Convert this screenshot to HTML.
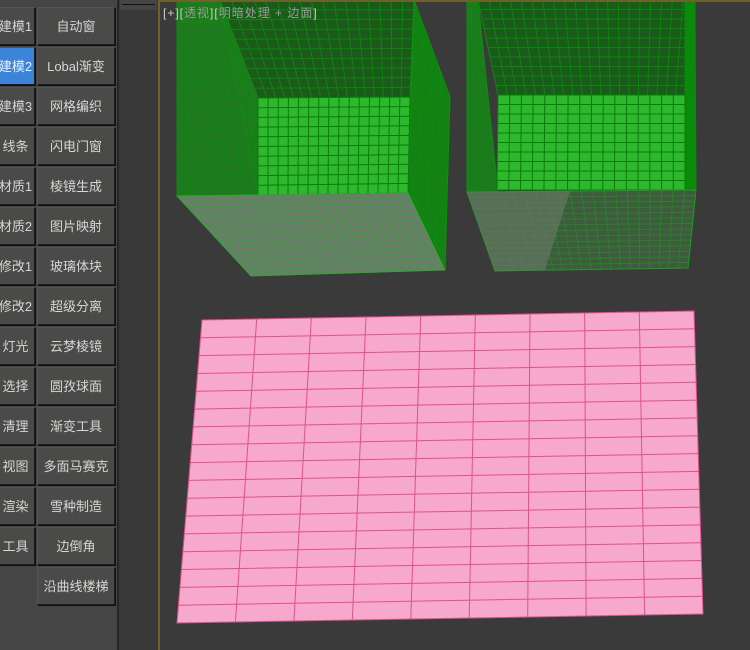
<!DOCTYPE html>
<html><head><meta charset="utf-8"><style>
body{margin:0;width:750px;height:650px;background:#3a3a3a;position:relative;overflow:hidden;font-family:"Liberation Sans","Noto Sans CJK SC",sans-serif}
#lp{position:absolute;left:0;top:0;width:117px;height:650px;background:#454545}
.b{position:absolute;height:38px;background:#4a4a48;border:1px solid #1c1c1c;border-top-color:#555;border-left-color:#555;box-shadow:1px 1px 0 #111;color:#d6d6d6;font-size:13px;line-height:38px;text-align:center;box-sizing:border-box}
.c1{left:-4px;width:39px}
.c2{left:37px;width:78px}
.act{background:#3b84d9;color:#eaf2ff}
#sep{position:absolute;left:117px;top:0;width:2px;height:650px;background:#262626}
#mid{position:absolute;left:119px;top:0;width:40px;height:650px;background:#383838}
#bar{position:absolute;left:120px;top:0;width:37px;height:10px;background:#454545}
#bar div{position:absolute;left:2px;right:2px;top:4px;height:1px;background:#111}
#yl{position:absolute;left:158px;top:0;width:2px;height:650px;background:#6f6128}
#yt{position:absolute;left:158px;top:0;width:592px;height:2px;background:#6f6128}
#lab{position:absolute;left:163px;top:4px;font-size:12px;color:#cfcfcf;letter-spacing:1px}
#lab span{color:#9a9a9a}
svg{position:absolute;left:0;top:0}
</style></head><body>
<div id="lp"></div>
<div id="btns"></div>
<div id="sep"></div><div id="mid"></div><div id="bar"><div></div></div>
<svg id="s" width="750" height="650"></svg>
<div id="yl"></div><div id="yt"></div>
<div id="lab">[+][<span>透视</span>][<span>明暗处理 + 边面</span>]</div>
<script>
var c1=["建模1","建模2","建模3","线条","材质1","材质2","修改1","修改2","灯光","选择","清理","视图","渲染","工具"];
var c2=["自动窗","Lobal渐变","网格编织","闪电门窗","棱镜生成","图片映射","玻璃体块","超级分离","云梦棱镜","圆孜球面","渐变工具","多面马赛克","雪种制造","边倒角","沿曲线楼梯"];
var h="";
c1.forEach(function(t,i){h+='<div class="b c1'+(i==1?' act':'')+'" style="top:'+(7+i*40)+'px">'+t+'</div>'});
c2.forEach(function(t,i){h+='<div class="b c2" style="top:'+(7+i*40)+'px">'+t+'</div>'});
document.getElementById('btns').innerHTML=h;
var S="";
function L(a,b,t){return [a[0]+(b[0]-a[0])*t,a[1]+(b[1]-a[1])*t];}
function quad(p,fill,stroke,nu,nv,op){
 S+='<polygon points="'+p.map(function(q){return q.join(",")}).join(" ")+'" fill="'+fill+'" stroke="'+stroke+'" stroke-width="1"/>';
 var d="";
 for(var i=1;i<nu;i++){var t=i/nu,a=L(p[0],p[1],t),b=L(p[3],p[2],t);d+="M"+a[0].toFixed(1)+" "+a[1].toFixed(1)+"L"+b[0].toFixed(1)+" "+b[1].toFixed(1);}
 for(var j=1;j<nv;j++){var t=j/nv,a=L(p[0],p[3],t),b=L(p[1],p[2],t);d+="M"+a[0].toFixed(1)+" "+a[1].toFixed(1)+"L"+b[0].toFixed(1)+" "+b[1].toFixed(1);}
 S+='<path d="'+d+'" stroke="'+stroke+'" stroke-width="1" fill="none" opacity="'+(op||1)+'"/>';
}
// left box
quad([[177,0],[220,0],[258,98],[258,195]],"#1f7a1f","#0b8f0b",4,18,0.7);
quad([[177,0],[258,195],[177,196],[177,0]],"#1f7a1f","#0b8f0b",1,1);
quad([[177,0],[220,0],[258,195],[177,196]],"#1f7a1f","#0b8f0b",6,18,0.7);
quad([[220,0],[414,0],[410,97],[258,98]],"#1b5a1b","#0d8a0d",17,10,0.9);
quad([[414,0],[450,97],[445,270],[408,195]],"#157f15","#0a950a",4,22,0.6);
quad([[258,98],[410,97],[408,193],[258,195]],"#2eb82e","#0c7a0c",15,10);
quad([[177,196],[408,193],[445,270],[251,276]],"#6c7c6c","#22b022",20,14,0.55);
// right box
quad([[467,0],[478,0],[498,192],[467,192]],"#1e7a1e","#0b8f0b",3,18,0.7);
quad([[478,0],[694,0],[685,95],[498,95]],"#1a5a1a","#0d8a0d",20,10,0.9);
quad([[685,0],[695,0],[696,190],[685,190]],"#0a8a0a","#0a8a0a",1,1);
quad([[498,95],[685,95],[685,190],[497,190]],"#2eb82e","#0c7a0c",16,10);
quad([[467,192],[696,190],[688,268],[495,271]],"#3f5a3f","#1c9e1c",20,14,0.55);
S+='<polygon points="467,192 570,191 545,270 495,271" fill="#6b7a6b" opacity="0.6"/>';
// pink plane
quad([[202,320],[694,311],[703,614],[177,623]],"#f6a9cc","#e0508e",9,17);
document.getElementById('s').innerHTML=S;
</script>
</body></html>
